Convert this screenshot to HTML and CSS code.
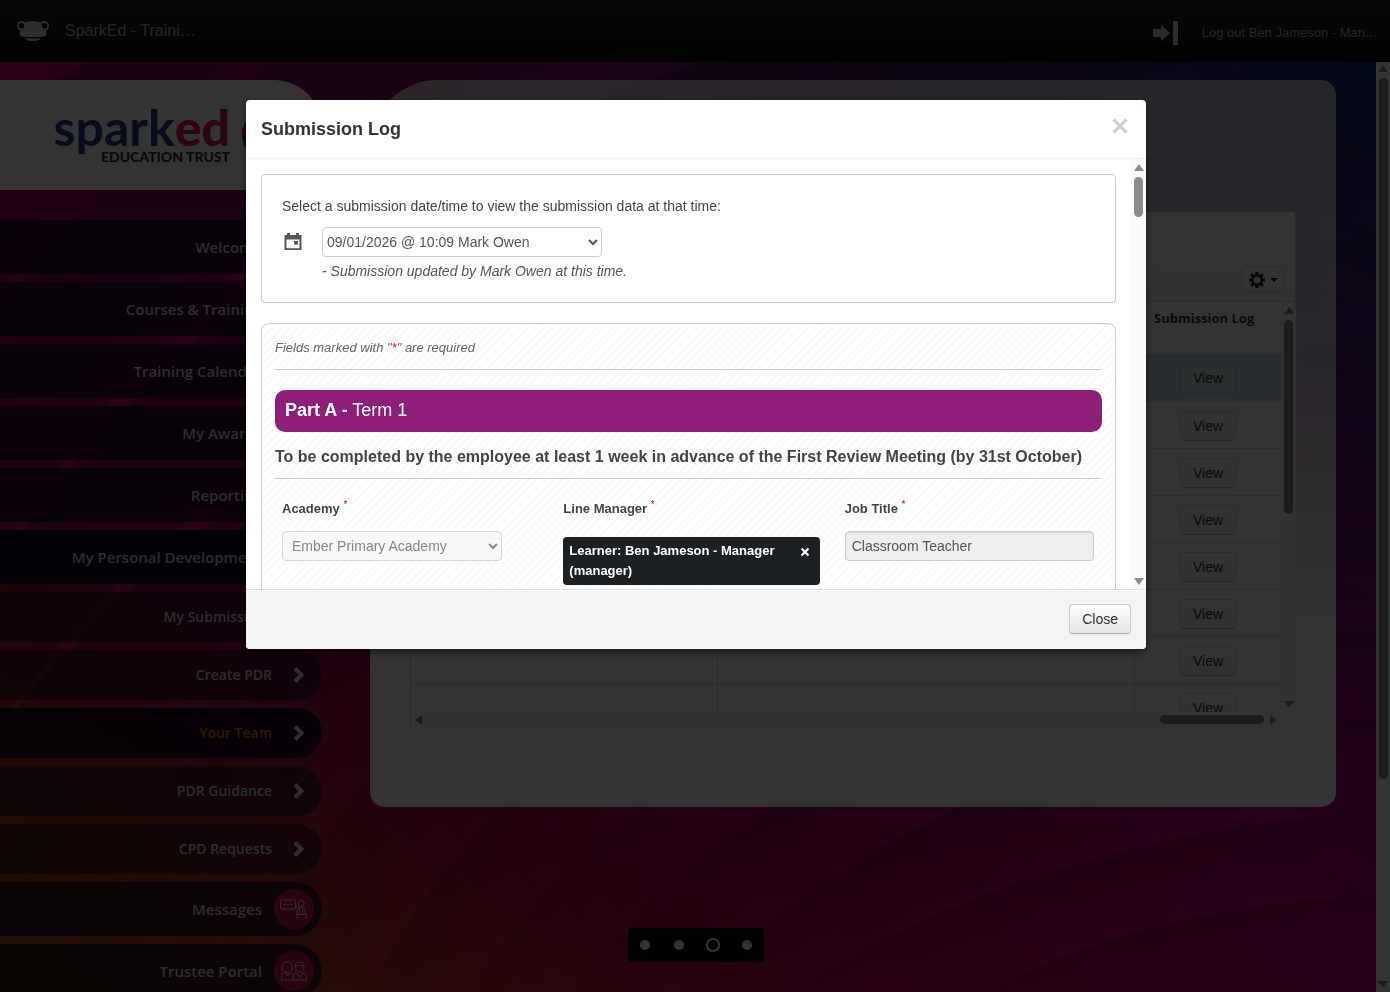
FILE: index.html
```html
<!DOCTYPE html>
<html lang="en">
<head>
<meta charset="utf-8">
<title>SparkEd - Submission Log</title>
<link rel="stylesheet" href="styles.css">
</head>
<body>
<div class="app">
  <header class="topbar">
    <svg class="frog" viewBox="0 0 32 22" aria-hidden="true">
      <path fill="currentColor" d="M8.500 2.500Q16 0 23.500 2.500L28 9Q30 13 29 15.500 28 17 16 17T3 15.500Q2 13 4 9Z"/>
      <circle cx="4.800" cy="5.800" r="4.800" fill="currentColor"/><circle cx="27.200" cy="5.800" r="4.800" fill="currentColor"/>
      <circle cx="4.400" cy="5.800" r="2.800" fill="#141414"/><circle cx="27.600" cy="5.800" r="2.800" fill="#141414"/>
      <path fill="currentColor" d="M8 18.200q8 .8 16 0-2 2.800-8 2.800t-8-2.800Z"/>
    </svg>
    <span class="site">SparkEd - Traini…</span>
    <a class="logout" href="#">
      <svg viewBox="0 0 26 24" aria-hidden="true"><path fill="currentColor" d="M0 8h8V4l9 8-9 8v-4H0ZM20 0h5v24h-5Z"/></svg>
      <span>Log out Ben Jameson - Man…</span>
    </a>
  </header>
  <div class="stage">
    <main class="page">
      <svg class="art" viewBox="0 62 1376 930" preserveAspectRatio="none" aria-hidden="true">
        <defs>
          <linearGradient id="base" x1="0" y1="1" x2="1" y2="0">
            <stop offset="0" stop-color="#be6400"/><stop offset=".12" stop-color="#c83c1e"/><stop offset=".28" stop-color="#dc0a5a"/><stop offset=".5" stop-color="#cd0082"/><stop offset=".72" stop-color="#821482"/><stop offset="1" stop-color="#143282"/>
          </linearGradient>
          <linearGradient id="top" x1="0" y1="0" x2="1" y2="0">
            <stop offset="0" stop-color="#dc0078" stop-opacity=".9"/><stop offset=".3" stop-color="#aa0f82" stop-opacity=".6"/><stop offset="1" stop-color="#1e2878" stop-opacity="0"/>
          </linearGradient>
          <linearGradient id="fade" x1="0" y1="0" x2="0" y2="1"><stop offset="0" stop-color="#fff"/><stop offset=".6" stop-color="#000"/></linearGradient>
          <mask id="m"><rect y="62" width="1376" height="930" fill="url(#fade)"/></mask>
          <linearGradient id="band" x1="0" y1="0" x2="1" y2="1"><stop offset=".36" stop-color="#1e1428" stop-opacity=".38"/><stop offset=".58" stop-color="#1e1428" stop-opacity="0"/></linearGradient>
        </defs>
        <rect y="62" width="1376" height="930" fill="url(#base)"/>
        <rect y="62" width="1376" height="930" fill="url(#top)" mask="url(#m)"/>
        <g fill="url(#band)">
          <path d="M-50 180Q20 90 90 62H275Q60 180-50 400Z"/>
          <path d="M-50 400Q60 180 275 62H560Q140 250-80 700Z"/>
          <path d="M-80 700Q140 250 700 62H1200Q150 320-100 900Z"/>
          <path d="M-100 900Q150 320 1376 80V135Q120 360-40 992Z"/>
          <path d="M-40 992Q120 360 1376 135V235Q260 420 60 992Z"/>
          <path d="M60 992Q260 420 1376 235V335Q430 500 240 992Z"/>
          <path d="M240 992Q430 500 1376 335V440Q560 580 370 992Z"/>
          <path d="M370 992Q560 580 1376 440V535Q700 620 470 992Z"/>
          <path d="M470 992Q700 620 1376 535V628Q820 670 570 992Z"/>
          <path d="M570 992Q820 670 1376 628V718Q930 740 695 992Z"/>
          <path d="M695 992Q930 740 1376 718V812Q1040 835 790 992Z"/>
          <path d="M790 992Q1040 835 1376 812V897Q1150 905 985 992Z"/>
          <path d="M985 992Q1150 905 1376 897V992Z"/>
        </g>
      </svg>
      <aside class="sidebar">
        <div class="brand">
          <div class="brand-text">
            <div class="brand-name">spark<span>ed</span></div>
            <div class="brand-sub">EDUCATION TRUST</div>
          </div>
          <svg class="brand-mark" viewBox="0 0 54 54" aria-hidden="true"><circle cx="27" cy="27" r="27" fill="#28377d"/><path fill="#dc1464" d="M0 20l14-6 6 10L0 27Z"/></svg>
        </div>
        <nav class="menu">
          <a class="item" href="#">Welcome<i class="badge"></i></a>
          <a class="item" href="#">Courses &amp; Training<i class="badge"></i></a>
          <a class="item" href="#">Training Calendar<i class="badge"></i></a>
          <a class="item" href="#">My Awards<i class="badge"></i></a>
          <a class="item" href="#">Reporting<i class="badge"></i></a>
          <a class="item open" href="#">My Personal Development<i class="badge"></i></a>
          <a class="item sub" href="#">My Submissions<svg class="chev" viewBox="0 0 11 16" aria-hidden="true"><path d="M2 1.500 8.500 8 2 14.500"/></svg></a>
          <a class="item sub" href="#">Create PDR<svg class="chev" viewBox="0 0 11 16" aria-hidden="true"><path d="M2 1.500 8.500 8 2 14.500"/></svg></a>
          <a class="item sub current" href="#">Your Team<svg class="chev" viewBox="0 0 11 16" aria-hidden="true"><path d="M2 1.500 8.500 8 2 14.500"/></svg></a>
          <a class="item sub" href="#">PDR Guidance<svg class="chev" viewBox="0 0 11 16" aria-hidden="true"><path d="M2 1.500 8.500 8 2 14.500"/></svg></a>
          <a class="item sub" href="#">CPD Requests<svg class="chev" viewBox="0 0 11 16" aria-hidden="true"><path d="M2 1.500 8.500 8 2 14.500"/></svg></a>
          <a class="item" href="#">Messages<i class="badge"><svg viewBox="0 0 28 20" aria-hidden="true"><path d="M1.500 1h13q1 0 1 1v7q0 1-1 1h-13q-1 0-1-1V2q0-1 1-1ZM3.500 5.500h2M7 5.500h2M10.500 5.500h2M15.500 7l3 1.500M18 4.500a3 3 0 1 1 6 0 3 3 0 0 1-6 0M17 15v-4q0-2.500 4-2.500t4 2.500v4M19.500 10v5M22.500 10v5M15.500 15.500h11.500M17 15.500V20M26 15.500V20"/></svg></i></a>
          <a class="item" href="#">Trustee Portal<i class="badge"><svg viewBox="0 0 28 20" aria-hidden="true"><path d="M3.500 10.500Q1.500 10 2 5.500 2.500.8 7 .8t5 4.700q.3 4.500-1.500 5M5 10.500q2 2 4 0M15 5.500a4.500 4.500 0 1 1 9 0 4.500 5.300 0 0 1-9 0M15 5.200q4.500-1.500 9 0M1.500 19v-3.500q0-3 4-4l2 3.500 2-3.500 3 1.500M13 19v-3.500q0-3 3.500-4l3 5.500 3-5.500q4 1 4 4V19ZM1.500 19H13"/></svg></i></a>
        </nav>
      </aside>
      <section class="card">
        <div class="panel">
          <div class="tools">
            <button class="gear" type="button" aria-label="Table settings">
              <svg viewBox="0 0 16 16" aria-hidden="true"><circle cx="8" cy="8" r="4.800" fill="none" stroke="currentColor" stroke-width="2.600"/><path stroke="currentColor" stroke-width="3" d="M8 0v2.500M8 13.500V16M0 8h2.500M13.500 8H16M2.300 2.300l1.900 1.900M11.800 11.800l1.900 1.900M2.300 13.700l1.900-1.900M11.800 4.200l1.900-1.900"/></svg>
              <span class="caret"></span>
            </button>
          </div>
          <div class="grid">
            <div class="grid-view">
              <table>
                <colgroup><col class="c1"><col class="c2"><col class="c3"></colgroup>
                <thead><tr><th></th><th></th><th>Submission Log</th></tr></thead>
                <tbody>
                  <tr class="on"><td></td><td></td><td><button class="btn" type="button">View</button></td></tr>
                  <tr><td></td><td></td><td><button class="btn" type="button">View</button></td></tr>
                  <tr><td></td><td></td><td><button class="btn" type="button">View</button></td></tr>
                  <tr><td></td><td></td><td><button class="btn" type="button">View</button></td></tr>
                  <tr><td></td><td></td><td><button class="btn" type="button">View</button></td></tr>
                  <tr><td></td><td></td><td><button class="btn" type="button">View</button></td></tr>
                  <tr><td></td><td></td><td><button class="btn" type="button">View</button></td></tr>
                  <tr><td></td><td></td><td><button class="btn" type="button">View</button></td></tr>
                </tbody>
              </table>
            </div>
            <div class="bar"><i class="up"></i><i class="thumb t-grid"></i><i class="down"></i></div>
            <div class="bar-h"><i class="left"></i><i class="thumb-h"></i><i class="right"></i></div>
          </div>
        </div>
      </section>
      <div class="pager"><i></i><i></i><i class="ring"></i><i></i></div>
    </main>
    <div class="bar page-bar"><i class="up"></i><i class="thumb t-page"></i><i class="down"></i></div>
  </div>
</div>

<div class="backdrop">
  <div class="modal" role="dialog" aria-labelledby="modal-title">
    <div class="modal-head">
      <h1 id="modal-title">Submission Log</h1>
      <button class="x" type="button" aria-label="Close dialog"><svg viewBox="0 0 16 16" aria-hidden="true"><path d="M1.500 1.500l13 13M14.500 1.500l-13 13"/></svg></button>
    </div>
    <div class="modal-body">
      <div class="content">
        <div class="picker">
          <label for="when">Select a submission date/time to view the submission data at that time:</label>
          <div class="picker-row">
            <svg class="cal" viewBox="0 0 18 18" aria-hidden="true"><path fill="currentColor" fill-rule="evenodd" d="M3 0h3v2h6V0h3v2h2.500v15H.500V2H3ZM2.500 6.500v8.700h13V6.500ZM10 8h4v3.500h-4Z"/></svg>
            <select id="when"><option>09/01/2026 @ 10:09 Mark Owen</option></select>
          </div>
          <p class="note">- Submission updated by Mark Owen at this time.</p>
        </div>
        <form class="form">
          <p class="req">Fields marked with "<span>*</span>" are required</p>
          <h2 class="part"><b>Part A -</b> Term 1</h2>
          <h3>To be completed by the employee at least 1 week in advance of the First Review Meeting (by 31st October)</h3>
          <div class="fields">
            <div class="field">
              <label for="academy">Academy <sup>*</sup></label>
              <select id="academy" disabled><option>Ember Primary Academy</option></select>
            </div>
            <div class="field">
              <span class="label">Line Manager <sup>*</sup></span>
              <div class="tag"><span>Learner: Ben Jameson - Manager (manager)</span><button type="button" aria-label="Remove"><svg viewBox="0 0 10 10" aria-hidden="true"><path d="M1.500 1.500l7 7M8.500 1.500l-7 7"/></svg></button></div>
            </div>
            <div class="field">
              <label for="job">Job Title <sup>*</sup></label>
              <input id="job" type="text" value="Classroom Teacher" readonly>
            </div>
          </div>
        </form>
      </div>
      <div class="bar"><i class="up"></i><i class="thumb t-modal"></i><i class="down"></i></div>
    </div>
    <div class="modal-foot"><button class="btn" type="button">Close</button></div>
  </div>
</div>
</body>
</html>
```
FILE: styles.css
```css
* { box-sizing: border-box; }
html, body { height: 100%; }
body { margin: 0; overflow: hidden; font: 14px/20px "Liberation Sans", Arial, sans-serif; color: #333; }
h1, h2, h3, p { margin: 0; }
a { color: inherit; text-decoration: none; }
svg { display: block; }
i { display: block; flex: none; }

.app { height: 100%; display: flex; flex-direction: column; background: #14001e; }

/* top bar */
.topbar { height: 62px; flex: none; display: flex; align-items: center; padding: 0 12px 0 17px; background: linear-gradient(#282828, #0a0a0a); color: #fff; }
.frog { width: 32px; height: 22px; color: #e6e6e6; }
.site { margin-left: 16px; font-size: 16px; color: #b4b4b4; }
.logout { margin-left: auto; display: flex; align-items: center; gap: 23px; font-size: 13px; color: #b4b4b4; padding-top: 4px; }
.logout svg { width: 26px; height: 24px; color: #dcdcdc; }

.stage { flex: 1; min-height: 0; display: flex; }
.page { position: relative; flex: 1; min-width: 0; display: flex; align-items: flex-start; gap: 48px; padding: 18px 40px 0 0; overflow: hidden; }
.art { position: absolute; inset: 0; width: 100%; height: 100%; }

/* sidebar */
.sidebar { position: relative; width: 322px; flex: none; font-family: "Open Sans", "Noto Sans", sans-serif; }
.brand { height: 110px; display: flex; align-items: center; gap: 12px; padding-left: 54px; background: #fff; border-top-right-radius: 48px; }
.brand-text { width: 176px; flex: none; text-align: right; font-family: Lato, sans-serif; font-weight: bold; }
.brand-name { font-size: 50px; line-height: 44px; color: #28377d; white-space: nowrap; display: flex; justify-content: flex-end; }
.brand-name span { color: #dc1464; font-weight: 900; }
.brand-sub { font-size: 14px; line-height: 16px; font-weight: 900; color: #323232; white-space: nowrap; }
.brand-mark { width: 54px; height: 54px; }
.menu { margin-top: 30px; display: flex; flex-direction: column; gap: 8px; }
.item { height: 54px; display: flex; align-items: center; justify-content: flex-end; gap: 12px; padding-right: 8px; border-radius: 0 27px 27px 0; background: rgba(8, 4, 30, .7); color: #dcdcdc; font-size: 15px; font-weight: 550; white-space: nowrap; }
.item.open { background: rgba(8, 4, 30, .92); }
.sub { height: 50px; border-radius: 0 25px 25px 0; padding-right: 18px; gap: 21px; font-size: 14px; background: rgba(8, 4, 30, .5); }
.sub.current { background: rgba(8, 4, 30, .8); color: #dc821e; }
.badge { width: 40px; height: 40px; border-radius: 50%; background: #c8144b; display: grid; place-items: center; }
.badge svg { width: 28px; height: 20px; fill: none; stroke: #e6e6e6; stroke-width: 1; }
.chev { width: 11px; height: 16px; fill: none; stroke: #e6e6e6; stroke-width: 4; }

/* content */
.card { position: relative; flex: 1; min-width: 0; padding: 132px 41px 80px 40px; border-radius: 68px 15px 15px 15px; background: linear-gradient(rgba(255, 255, 255, .7) 0, rgba(255, 255, 255, .72) 40%, #fff 75%); }
.panel { background: #fff; border-radius: 4px 4px 0 0; }
.tools { height: 89px; display: flex; justify-content: flex-end; align-items: flex-end; padding: 0 10px 8px; background: linear-gradient(rgba(242, 242, 242, 0) 50%, #f2f2f2); }
.gear { height: 27px; display: flex; align-items: center; gap: 5px; padding: 0 6px 0 7px; border: 1px solid #d2d2d2; border-radius: 4px; background: #f7f7f7; color: #222; }
.gear svg { width: 16px; height: 16px; }
.caret { border: 4px solid transparent; border-top-color: #222; border-bottom: 0; }
.grid { display: grid; grid-template-columns: 1fr 15px; grid-template-rows: 410px 15px; margin-right: -1px; border-top: 1px solid #d2d2d2; border-left: 1px solid #d2d2d2; }
.grid-view { overflow: hidden; }
table { width: 100%; border-collapse: separate; border-spacing: 0; table-layout: fixed; }
.c2 { width: 417px; }
.c3 { width: 146px; }
th { height: 52px; padding: 6px 0 0 19px; vertical-align: top; text-align: left; font: bold 13px/20px "Open Sans", "Noto Sans", sans-serif; background: #fff; }
td { height: 47px; padding: 1px 0 0; text-align: center; border-right: 1px solid #dcdcdc; border-bottom: 1px solid #dcdcdc; }
td:last-child { border-right: 0; }
.on td { height: 48px; background: #c8e1eb; }
.btn { height: 30px; padding: 0 12px; font: 14px/20px "Liberation Sans", Arial, sans-serif; color: #333; border: 1px solid #ccc; border-bottom-color: #b3b3b3; border-radius: 4px; background: linear-gradient(#fff, #e6e6e6); box-shadow: 0 1px 2px rgba(0, 0, 0, .05); }
td .btn { border-color: #dcdcdc; border-bottom-color: #bebebe; background: linear-gradient(#fff, #f0f0f0); }
.on .btn { border-color: #b9cdd7; background: #d7e6eb; }

/* scroll bars */
.bar { width: 15px; display: flex; flex-direction: column; align-items: center; padding: 5px 0 4px; background: #fafafa; }
.up, .down { border: 5px solid transparent; }
.up { border-bottom: 7px solid #8b8b8b; border-top: 0; }
.down { border-top: 7px solid #8b8b8b; border-bottom: 0; margin-top: auto; }
.thumb { width: 9px; margin-top: 6px; border-radius: 5px; background: #8b8b8b; }
.t-grid { height: 194px; }
.t-modal { height: 40px; }
.page-bar { width: 14px; padding-top: 3px; background: #fff; }
.t-page { height: 76%; }
.bar-h { height: 15px; display: flex; align-items: center; padding: 0 4px; background: #fafafa; }
.left, .right { border: 5px solid transparent; }
.left { border-right: 7px solid #8b8b8b; border-left: 0; }
.right { border-left: 7px solid #8b8b8b; border-right: 0; margin-left: 6px; }
.thumb-h { width: 104px; height: 9px; margin-left: auto; border-radius: 5px; background: #8b8b8b; }

.pager { position: absolute; left: 50%; bottom: 30px; width: 136px; height: 34px; margin-left: -60px; display: flex; align-items: center; justify-content: space-around; background: #000; border-radius: 5px; }
.pager i { width: 10px; height: 10px; margin: 0 12px; border-radius: 50%; background: #fff; }
.pager .ring { width: 14px; height: 14px; margin: 0 10px; background: none; border: 2px solid #fff; }

/* dialog */
.backdrop { position: fixed; inset: 0; display: flex; justify-content: center; align-items: flex-start; padding: 100px 0 0 2px; background: rgba(0, 0, 0, .8); }
.modal { width: 900px; max-width: 100%; display: flex; flex-direction: column; background: #fff; border-radius: 4px; box-shadow: 0 3px 9px rgba(0, 0, 0, .5); overflow: hidden; }
.modal-head { height: 59px; display: flex; justify-content: space-between; align-items: center; padding: 0 18px 0 15px; border-bottom: 1px solid #eee; }
h1 { font-size: 18px; line-height: 24px; }
.x { width: 16px; height: 16px; margin-bottom: 7px; padding: 0; border: 0; background: none; }
.x svg { width: 16px; height: 16px; fill: none; stroke: #ccc; stroke-width: 3; }
.modal-body { height: 430px; display: flex; overflow: hidden; }
.content { flex: 1; padding: 15px; height: 430px; overflow: hidden; }
.picker { height: 129px; padding: 21px 20px; border: 1px solid #ccc; border-radius: 4px; color: #444; }
.picker label { display: block; }
.picker-row { display: flex; align-items: center; gap: 20px; margin-top: 11px; }
.cal { width: 18px; height: 18px; margin-left: 2px; color: #555; }
select, input { height: 30px; font: 14px/20px "Liberation Sans", Arial, sans-serif; color: #555; border: 1px solid #ccc; border-radius: 4px; background: #fff; }
#when { width: 280px; }
.note { margin: 4px 0 0 40px; font-style: italic; color: #555; }
.form { height: 400px; margin-top: 20px; padding: 13px; border: 1px solid #ccc; border-radius: 8px; background: repeating-linear-gradient(135deg, #fff 0 3px, #fbfbfb 3px 6px); }
.req { height: 33px; padding-top: 1px; border-bottom: 1px solid #ccc; font-size: 13px; line-height: 20px; font-style: italic; color: #666; }
.req span { color: #f00; }
.part { height: 42px; margin-top: 20px; padding: 0 10px 2px; font-size: 18px; line-height: 40px; font-weight: normal; color: #fff; background: #8e1e78; border-radius: 10px; }
h3 { margin-top: 15px; padding-bottom: 11px; border-bottom: 1px solid #ccc; font-size: 16px; line-height: 20px; color: #444; }
.fields { display: grid; grid-template-columns: repeat(3, 1fr); gap: 32px; margin-top: 20px; padding: 0 8px 0 7px; }
.field { min-width: 0; }
.field label, .label { display: block; height: 32px; font-size: 13px; line-height: 20px; font-weight: bold; color: #444; }
sup { font-size: 10px; line-height: 0; font-weight: normal; color: #c00; }
#academy { width: 220px; padding-left: 5px; color: #888; border-color: #d6d6d6; background: #f8f8f8; opacity: 1; }
#job { width: 100%; padding: 0 6px; background: #eee; box-shadow: inset 0 1px 1px rgba(0, 0, 0, .08); }
.tag { display: flex; justify-content: space-between; align-items: flex-start; margin: 6px 0; width: 257px; padding: 4px 10px 4px 6px; border-radius: 4px; background: #1c2023; color: #fff; font-size: 13px; font-weight: bold; line-height: 20px; }
.tag button { width: 10px; height: 10px; margin-top: 6px; padding: 0; border: 0; background: none; flex: none; }
.tag svg { width: 10px; height: 10px; fill: none; stroke: #fff; stroke-width: 2; }
.modal-foot { height: 60px; display: flex; justify-content: flex-end; align-items: center; padding: 0 15px 2px; border-top: 1px solid #ddd; background: #f4f4f4; box-shadow: inset 0 1px 0 #fff; }
```
